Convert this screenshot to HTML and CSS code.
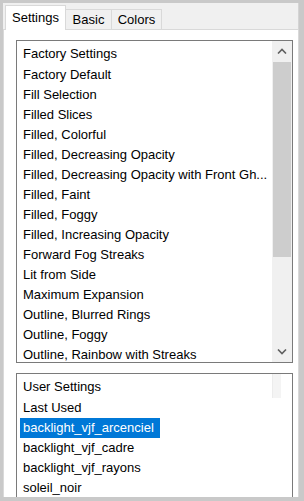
FILE: index.html
```html
<!DOCTYPE html>
<html lang="en">
<head>
    <meta charset="UTF-8">
    <meta name="viewport" content="width=device-width, initial-scale=1.0">
    <title>Presets</title>
    <link rel="stylesheet" href="styles.css">
</head>

<body>
    <div class="window">
        <div class="tabs">
            <div class="tab active">Settings</div>
            <div class="tab">Basic</div>
            <div class="tab">Colors</div>
        </div>

        <div class="panel">
            <!-- factory presets -->
            <div class="listbox presets">
                <div class="items">
                    <div class="group">Factory Settings</div>
                    <div class="item">Factory Default</div>
                    <div class="item">Fill Selection</div>
                    <div class="item">Filled Slices</div>
                    <div class="item">Filled, Colorful</div>
                    <div class="item">Filled, Decreasing Opacity</div>
                    <div class="item">Filled, Decreasing Opacity with Front Gh...</div>
                    <div class="item">Filled, Faint</div>
                    <div class="item">Filled, Foggy</div>
                    <div class="item">Filled, Increasing Opacity</div>
                    <div class="item">Forward Fog Streaks</div>
                    <div class="item">Lit from Side</div>
                    <div class="item">Maximum Expansion</div>
                    <div class="item">Outline, Blurred Rings</div>
                    <div class="item">Outline, Foggy</div>
                    <div class="item">Outline, Rainbow with Streaks</div>
                </div>
                <div class="scrollbar">
                    <div class="arrow">
                        <svg width="10" height="6" viewBox="0 0 10 6"><path d="M1 5.5 L5 1.5 L9 5.5" fill="none" stroke="#606060" stroke-width="1.6"/></svg>
                    </div>
                    <div class="track"><div class="thumb"></div></div>
                    <div class="arrow">
                        <svg width="10" height="6" viewBox="0 0 10 6"><path d="M1 0.5 L5 4.5 L9 0.5" fill="none" stroke="#606060" stroke-width="1.6"/></svg>
                    </div>
                </div>
            </div>

            <!-- user presets -->
            <div class="listbox user">
                <div class="items">
                    <div class="group">User Settings</div>
                    <div class="item">Last Used</div>
                    <div class="item"><span class="selected">backlight_vjf_arcenciel</span></div>
                    <div class="item">backlight_vjf_cadre</div>
                    <div class="item">backlight_vjf_rayons</div>
                    <div class="item">soleil_noir</div>
                </div>
                <div class="ghost-bar"><div class="ghost"></div></div>
            </div>
        </div>
    </div>
</body>
</html>
```

FILE: styles.css
```css
html, body {
    height: 100%;
}

body {
    margin: 0;
    padding: 3px 5px 4px 3px;
    box-sizing: border-box;
    background-color: #c9c9c9;
    font-family: "Liberation Sans", Arial, sans-serif;
    font-size: 13px;
    color: #000;
    overflow: hidden;
}

.window {
    height: 100%;
    display: flex;
    flex-direction: column;
    background: #f0f0f0;
}

.tabs {
    display: flex;
    align-items: flex-end;
    height: 27px;
    box-sizing: border-box;
    padding-left: 2px;
    border-bottom: 1px solid #d9d9d9;
    border-right: 1px solid #d4d4d4;
}

.tab {
    height: 20px;
    line-height: 19px;
    box-sizing: border-box;
    border: 1px solid #d9d9d9;
    border-bottom: none;
    margin-left: -1px;
    text-align: center;
    background: #f0f0f0;
}

.tab:nth-child(2) {
    width: 47px;
}

.tab:nth-child(3) {
    width: 51px;
}

.tab.active {
    width: 61px;
    height: 25px;
    line-height: 24px;
    margin-left: 0;
    margin-bottom: -1px;
    background: #fff;
    padding-bottom: 2px;
}

.panel {
    flex: 1;
    min-height: 0;
    overflow: hidden;
    background: #fff;
    border-left: 1px solid #d9d9d9;
    border-right: 1px solid #d9d9d9;
    padding: 10px 0 0 12px;
}

.listbox {
    display: flex;
    width: 277px;
    box-sizing: border-box;
    border: 1px solid #7a7a7a;
    background: #fff;
}

.presets {
    height: 323px;
}

.user {
    height: 200px;
    margin-top: 10px;
}

.items {
    flex: 1;
    min-width: 0;
    padding: 1px 0 0 3px;
}

.group {
    height: 23px;
    line-height: 23px;
    padding-left: 3px;
    white-space: nowrap;
}

.item {
    height: 20px;
    line-height: 20px;
    padding-left: 3px;
    white-space: nowrap;
    overflow: hidden;
}

.item:has(.selected) {
    padding-left: 0;
}

.selected {
    display: inline-block;
    padding: 0 6px 0 3px;
    background: #0078d7;
    color: #fff;
}

.scrollbar {
    width: 20px;
    display: flex;
    flex-direction: column;
    background: #f0f0f0;
}

.arrow {
    height: 20px;
    display: flex;
    align-items: center;
    justify-content: center;
}

.track {
    flex: 1;
    padding: 1px 1px 0 1px;
}

.thumb {
    height: 195px;
    background: #cdcdcd;
}

.ghost-bar {
    width: 20px;
}

.ghost {
    width: 8px;
    height: 24px;
    background: #f4f4f4;
    border-left: 1px solid #ececec;
}
```
